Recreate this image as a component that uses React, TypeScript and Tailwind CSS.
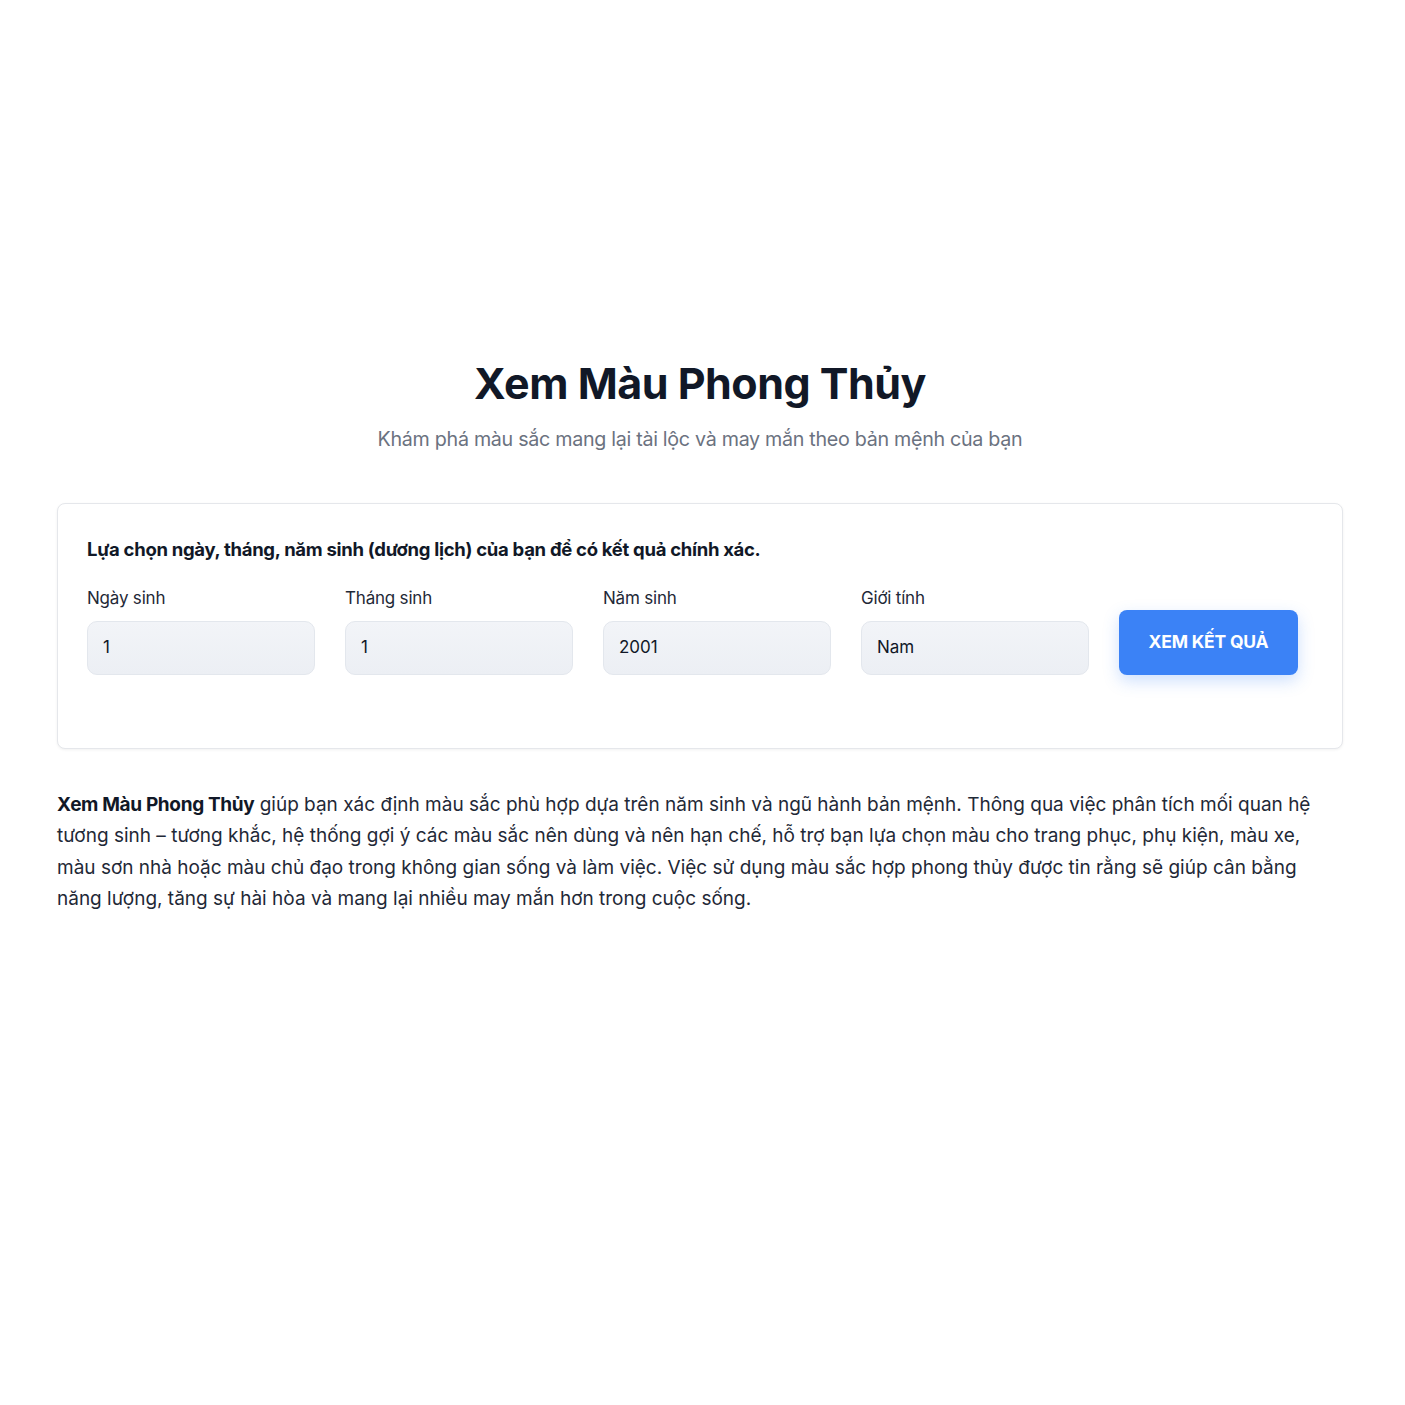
import React from "react";

const fields = [
  { label: "Ngày sinh", value: "1" },
  { label: "Tháng sinh", value: "1" },
  { label: "Năm sinh", value: "2001" },
  { label: "Giới tính", value: "Nam" },
];

export default function App() {
  return (
    <div
      className="min-h-[1405px] bg-white text-[#1f2937]"
      style={{ fontFamily: "Inter, 'Noto Sans', sans-serif" }}
    >
      <div className="pl-[57px] pr-[62px] pt-[358px]">
        <h1 className="text-center text-[43px] font-bold leading-[50px] tracking-[-0.5px] text-[#111827]">
          Xem Màu Phong Thủy
        </h1>
        <p className="mt-[17px] text-center text-[19.7px] leading-[28px] text-[#6b7280] tracking-[-0.3px]">
          Khám phá màu sắc mang lại tài lộc và may mắn theo bản mệnh của bạn
        </p>

        <div className="mt-[50px] h-[246px] rounded-[8px] border border-[#e5e7eb] bg-white px-[29px] pt-[33px] shadow-[0_1px_3px_rgba(0,0,0,0.06)]">
          <p className="text-[18.5px] font-bold leading-[24px] tracking-[-0.3px] text-[#111827]">
            Lựa chọn ngày, tháng, năm sinh (dương lịch) của bạn để có kết quả chính xác.
          </p>
          <div className="mt-[25px] flex items-end gap-[30px]">
            {fields.map((f) => (
              <div key={f.label} className="w-[228px]">
                <div className="text-[17px] leading-[24px] tracking-[-0.2px] text-[#1f2937]">
                  {f.label}
                </div>
                <div className="mt-[11px] flex h-[54px] items-center rounded-[10px] border border-[#e3e7ed] bg-gradient-to-b from-[#f2f4f8] to-[#eceff4] px-[15px] text-[17px] text-[#111827]">
                  {f.value}
                </div>
              </div>
            ))}
            <button className="flex h-[65px] w-[179px] items-center justify-center rounded-[8px] bg-[#3b82f6] text-[17.5px] font-bold tracking-[-0.2px] text-white shadow-[0_6px_16px_rgba(59,130,246,0.25)]">
              XEM KẾT QUẢ
            </button>
          </div>
        </div>

        <p className="mt-[40px] pr-[16px] text-[19px] leading-[31.3px] tracking-[0px] text-[#1f2937]">
          <strong className="font-bold tracking-[-0.35px] text-[#111827]">Xem Màu Phong Thủy</strong> giúp bạn xác định màu sắc phù hợp dựa trên năm sinh và ngũ hành bản mệnh. Thông qua việc phân tích mối quan hệ tương sinh – tương khắc, hệ thống gợi ý các màu sắc nên dùng và nên hạn chế, hỗ trợ bạn lựa chọn màu cho trang phục, phụ kiện, màu xe, màu sơn nhà hoặc màu chủ đạo trong không gian sống và làm việc. Việc sử dụng màu sắc hợp phong thủy được tin rằng sẽ giúp cân bằng năng lượng, tăng sự hài hòa và mang lại nhiều may mắn hơn trong cuộc sống.
        </p>
      </div>
    </div>
  );
}
